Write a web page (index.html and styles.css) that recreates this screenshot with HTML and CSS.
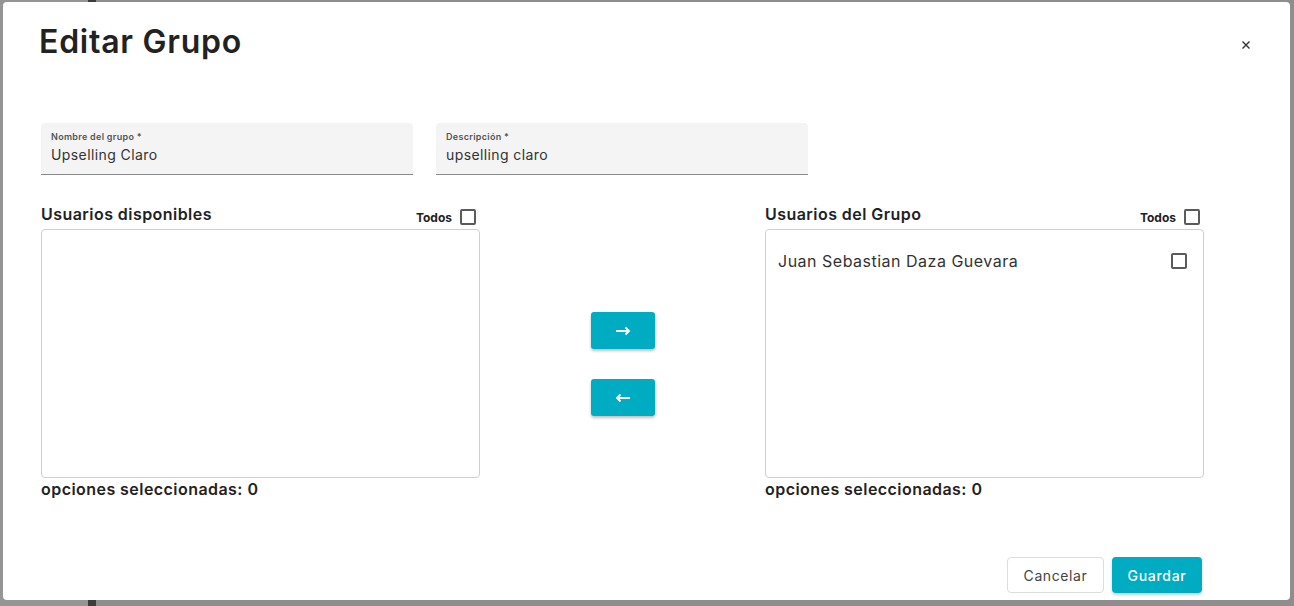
FILE: index.html
```html
<!DOCTYPE html>
<html lang="es">
<head>
    <meta charset="UTF-8">
    <meta name="viewport" content="width=device-width, initial-scale=1.0">
    <title>Editar Grupo</title>
    <link rel="stylesheet" href="styles.css">
</head>
<body>
    <div class="backdrop">
        <div class="modal">
            <!-- Header -->
            <header class="modal-header">
                <h1 class="modal-title">Editar Grupo</h1>
                <button class="close-btn" aria-label="Cerrar">
                    <svg viewBox="0 0 8 8" width="8" height="8">
                        <path d="M0.5 0.5l7 7M7.5 0.5l-7 7" stroke="#333" stroke-width="1.4" fill="none"/>
                    </svg>
                </button>
            </header>

            <div class="modal-body">
                <!-- Fields -->
                <div class="fields">
                    <div class="field">
                        <label class="field-label">Nombre del grupo *</label>
                        <div class="field-value">Upselling Claro</div>
                    </div>
                    <div class="field">
                        <label class="field-label">Descripción *</label>
                        <div class="field-value">upselling claro</div>
                    </div>
                </div>

                <!-- Transfer lists -->
                <div class="transfer">
                    <div class="list-col">
                        <div class="list-header">
                            <h2 class="list-title">Usuarios disponibles</h2>
                            <div class="select-all">
                                <span>Todos</span>
                                <span class="checkbox"></span>
                            </div>
                        </div>
                        <div class="list-box"></div>
                        <div class="list-count">opciones seleccionadas: 0</div>
                    </div>

                    <div class="transfer-actions">
                        <button class="arrow-btn">
                            <svg viewBox="0 0 16 10" width="16" height="10">
                                <path d="M1 5h13M10.5 1.5L14 5l-3.5 3.5" stroke="#fff" stroke-width="1.8" fill="none"/>
                            </svg>
                        </button>
                        <button class="arrow-btn">
                            <svg viewBox="0 0 16 10" width="16" height="10">
                                <path d="M15 5H2M5.5 1.5L2 5l3.5 3.5" stroke="#fff" stroke-width="1.8" fill="none"/>
                            </svg>
                        </button>
                    </div>

                    <div class="list-col">
                        <div class="list-header">
                            <h2 class="list-title">Usuarios del Grupo</h2>
                            <div class="select-all">
                                <span>Todos</span>
                                <span class="checkbox"></span>
                            </div>
                        </div>
                        <div class="list-box">
                            <div class="list-item">
                                <span>Juan Sebastian Daza Guevara</span>
                                <span class="checkbox"></span>
                            </div>
                        </div>
                        <div class="list-count">opciones seleccionadas: 0</div>
                    </div>
                </div>

                <!-- Footer -->
                <div class="modal-footer">
                    <button class="btn btn-outline">Cancelar</button>
                    <button class="btn btn-primary">Guardar</button>
                </div>
            </div>
        </div>
    </div>
</body>
</html>
```

FILE: styles.css
```css
/* Reset */
* {
    margin: 0;
    padding: 0;
    box-sizing: border-box;
}

body {
    font-family: Inter, 'Noto Sans', sans-serif;
    color: #222;
    height: 606px;
    overflow: hidden;
    background: linear-gradient(to right, #959595 88px, #3c3c3c 88px, #3c3c3c 96px, #8e8e8e 96px);
}

button {
    font-family: inherit;
    cursor: pointer;
}

.backdrop {
    padding: 2px 0 0 3px;
}

/* Modal */
.modal {
    width: 1287px;
    height: 598px;
    background: #fff;
    border-radius: 4px;
    overflow: hidden;
}

.modal-header {
    display: flex;
    justify-content: space-between;
    align-items: flex-start;
    padding: 20px 40px 0 36px;
}

.modal-title {
    font-size: 32px;
    line-height: 40px;
    font-weight: 600;
    letter-spacing: 0.75px;
    color: #222;
}

.close-btn {
    background: none;
    border: none;
    margin-top: 19px;
    width: 8px;
    height: 8px;
    display: flex;
}

.modal-body {
    width: 1201px;
    padding-left: 38px;
}

/* Fields */
.fields {
    display: flex;
    gap: 23px;
    margin-top: 61px;
}

.field {
    width: 372px;
    height: 52px;
    background: #f4f4f4;
    border-radius: 4px 4px 0 0;
    border-bottom: 1px solid #8a8a8a;
    padding: 8px 10px 0;
}

.field-label {
    display: block;
    font-size: 9px;
    line-height: 12px;
    font-weight: 600;
    letter-spacing: 0.3px;
    color: #555;
}

.field-value {
    font-size: 14px;
    line-height: 20px;
    margin-top: 2px;
    letter-spacing: 0.4px;
    color: #333;
}

/* Transfer */
.transfer {
    display: grid;
    grid-template-columns: 439px 1fr 439px;
    margin-top: 28px;
}

.list-header {
    display: flex;
    justify-content: space-between;
    align-items: flex-end;
}

.list-title {
    font-size: 16px;
    line-height: 22px;
    font-weight: 600;
    letter-spacing: 0.45px;
}

.select-all {
    display: flex;
    align-items: center;
    gap: 8px;
    font-size: 12px;
    font-weight: 700;
    padding-right: 4px;
}

.checkbox {
    width: 16px;
    height: 16px;
    border: 2px solid #5a5a5a;
    border-radius: 2px;
    display: inline-block;
}

.list-box {
    height: 249px;
    margin-top: 4px;
    border: 1px solid #cfcfcf;
    border-radius: 4px;
    padding: 19px 16px 0 12px;
}

.list-item {
    display: flex;
    justify-content: space-between;
    align-items: center;
    height: 24px;
    font-size: 16px;
    letter-spacing: 0.5px;
    color: #333;
}

.list-count {
    font-size: 16px;
    line-height: 22px;
    font-weight: 600;
    letter-spacing: 0.45px;
}

.transfer-actions {
    display: flex;
    flex-direction: column;
    align-items: center;
    gap: 30px;
    padding-top: 109px;
}

.arrow-btn {
    width: 64px;
    height: 37px;
    background: #00acc1;
    border: none;
    border-radius: 3px;
    box-shadow: 0 2px 3px rgba(0, 0, 0, 0.25);
    display: flex;
    align-items: center;
    justify-content: center;
}

/* Footer */
.modal-footer {
    display: flex;
    justify-content: flex-end;
    gap: 8px;
    margin-top: 57px;
    padding-right: 2px;
}

.btn {
    height: 36px;
    border-radius: 4px;
    font-size: 14px;
}

.btn-outline {
    width: 97px;
    background: #fff;
    border: 1px solid #ddd;
    color: #444;
    letter-spacing: 0.6px;
}

.btn-primary {
    width: 90px;
    background: #00acc1;
    border: none;
    color: #fff;
    font-weight: 500;
    letter-spacing: 0.7px;
    box-shadow: 0 2px 3px rgba(0, 0, 0, 0.2);
}
```
